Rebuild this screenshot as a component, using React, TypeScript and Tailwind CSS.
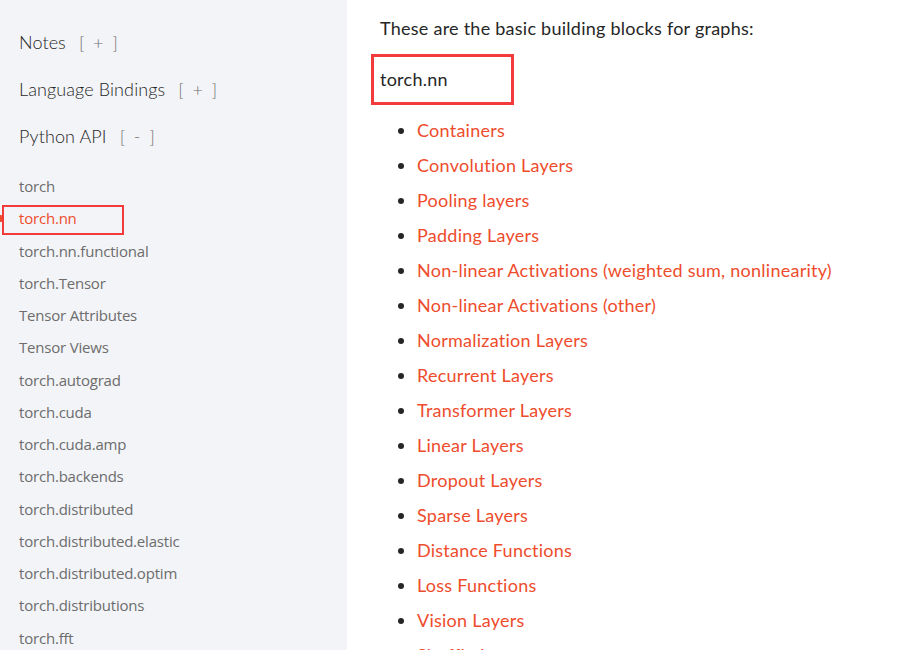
const sections = ["Notes", "Language Bindings", "Python API"];

const apiLinks = [
  "torch",
  "torch.nn",
  "torch.nn.functional",
  "torch.Tensor",
  "Tensor Attributes",
  "Tensor Views",
  "torch.autograd",
  "torch.cuda",
  "torch.cuda.amp",
  "torch.backends",
  "torch.distributed",
  "torch.distributed.elastic",
  "torch.distributed.optim",
  "torch.distributions",
  "torch.fft",
];

const blocks = [
  "Containers",
  "Convolution Layers",
  "Pooling layers",
  "Padding Layers",
  "Non-linear Activations (weighted sum, nonlinearity)",
  "Non-linear Activations (other)",
  "Normalization Layers",
  "Recurrent Layers",
  "Transformer Layers",
  "Linear Layers",
  "Dropout Layers",
  "Sparse Layers",
  "Distance Functions",
  "Loss Functions",
  "Vision Layers",
  "Shuffle Layers",
];

const App = () => {
  return (
    <div className="flex h-[650px] w-[907px] overflow-hidden bg-white">
      {/* Left nav */}
      <aside className="w-[347px] shrink-0 bg-[#f3f4f7] pt-[19px] pl-[19px] font-['Lato',sans-serif]">
        {sections.map((s) => (
          <div key={s} className="flex items-center h-[47px] text-[18px] font-light tracking-[0.1px] text-[#262626]">
            <span>{s}</span>
            <span className="ml-[13px] text-[#6c6c6d] tracking-[2px] whitespace-pre">
              {s === "Python API" ? "[ - ]" : "[ + ]"}
            </span>
          </div>
        ))}
        <ul className="mt-[10px] font-['Open_Sans',sans-serif] text-[15px] tracking-[-0.2px]">
          {apiLinks.map((l) => (
            <li key={l} className="relative h-[32.25px] leading-[32.25px]">
              {l === "torch.nn" ? (
                <>
                  <span className="absolute left-[-19px] top-[13px] h-[7px] w-[4px] rounded-r-full bg-[#ee4c2c]" />
                  <span className="absolute left-[-17px] top-[3px] h-[30px] w-[122px] border-2 border-[#f33b3b]" />
                  <span className="text-[#ee4c2c]">{l}</span>
                </>
              ) : (
                <span className="text-[#6c6c6d]">{l}</span>
              )}
            </li>
          ))}
        </ul>
      </aside>

      {/* Main content */}
      <main className="flex-1 pl-[24px] pt-[16px] font-['Lato',sans-serif] tracking-[0.25px] text-[#262626]">
        <p className="pl-[9px] text-[18px] leading-[24px]">These are the basic building blocks for graphs:</p>
        <div className="mt-[14px] flex h-[51px] w-[143px] items-center border-[3px] border-[#f33b3b] pl-[6px]">
          <h2 className="text-[18px]">torch.nn</h2>
        </div>
        <ul className="mt-[8px] list-disc pl-[46px] marker:text-[#262626] text-[18px]">
          {blocks.map((b) => (
            <li key={b} className="h-[35px] leading-[35px]">
              <a className="text-[#ee4c2c]">{b}</a>
            </li>
          ))}
        </ul>
      </main>
    </div>
  );
};

export default App;
